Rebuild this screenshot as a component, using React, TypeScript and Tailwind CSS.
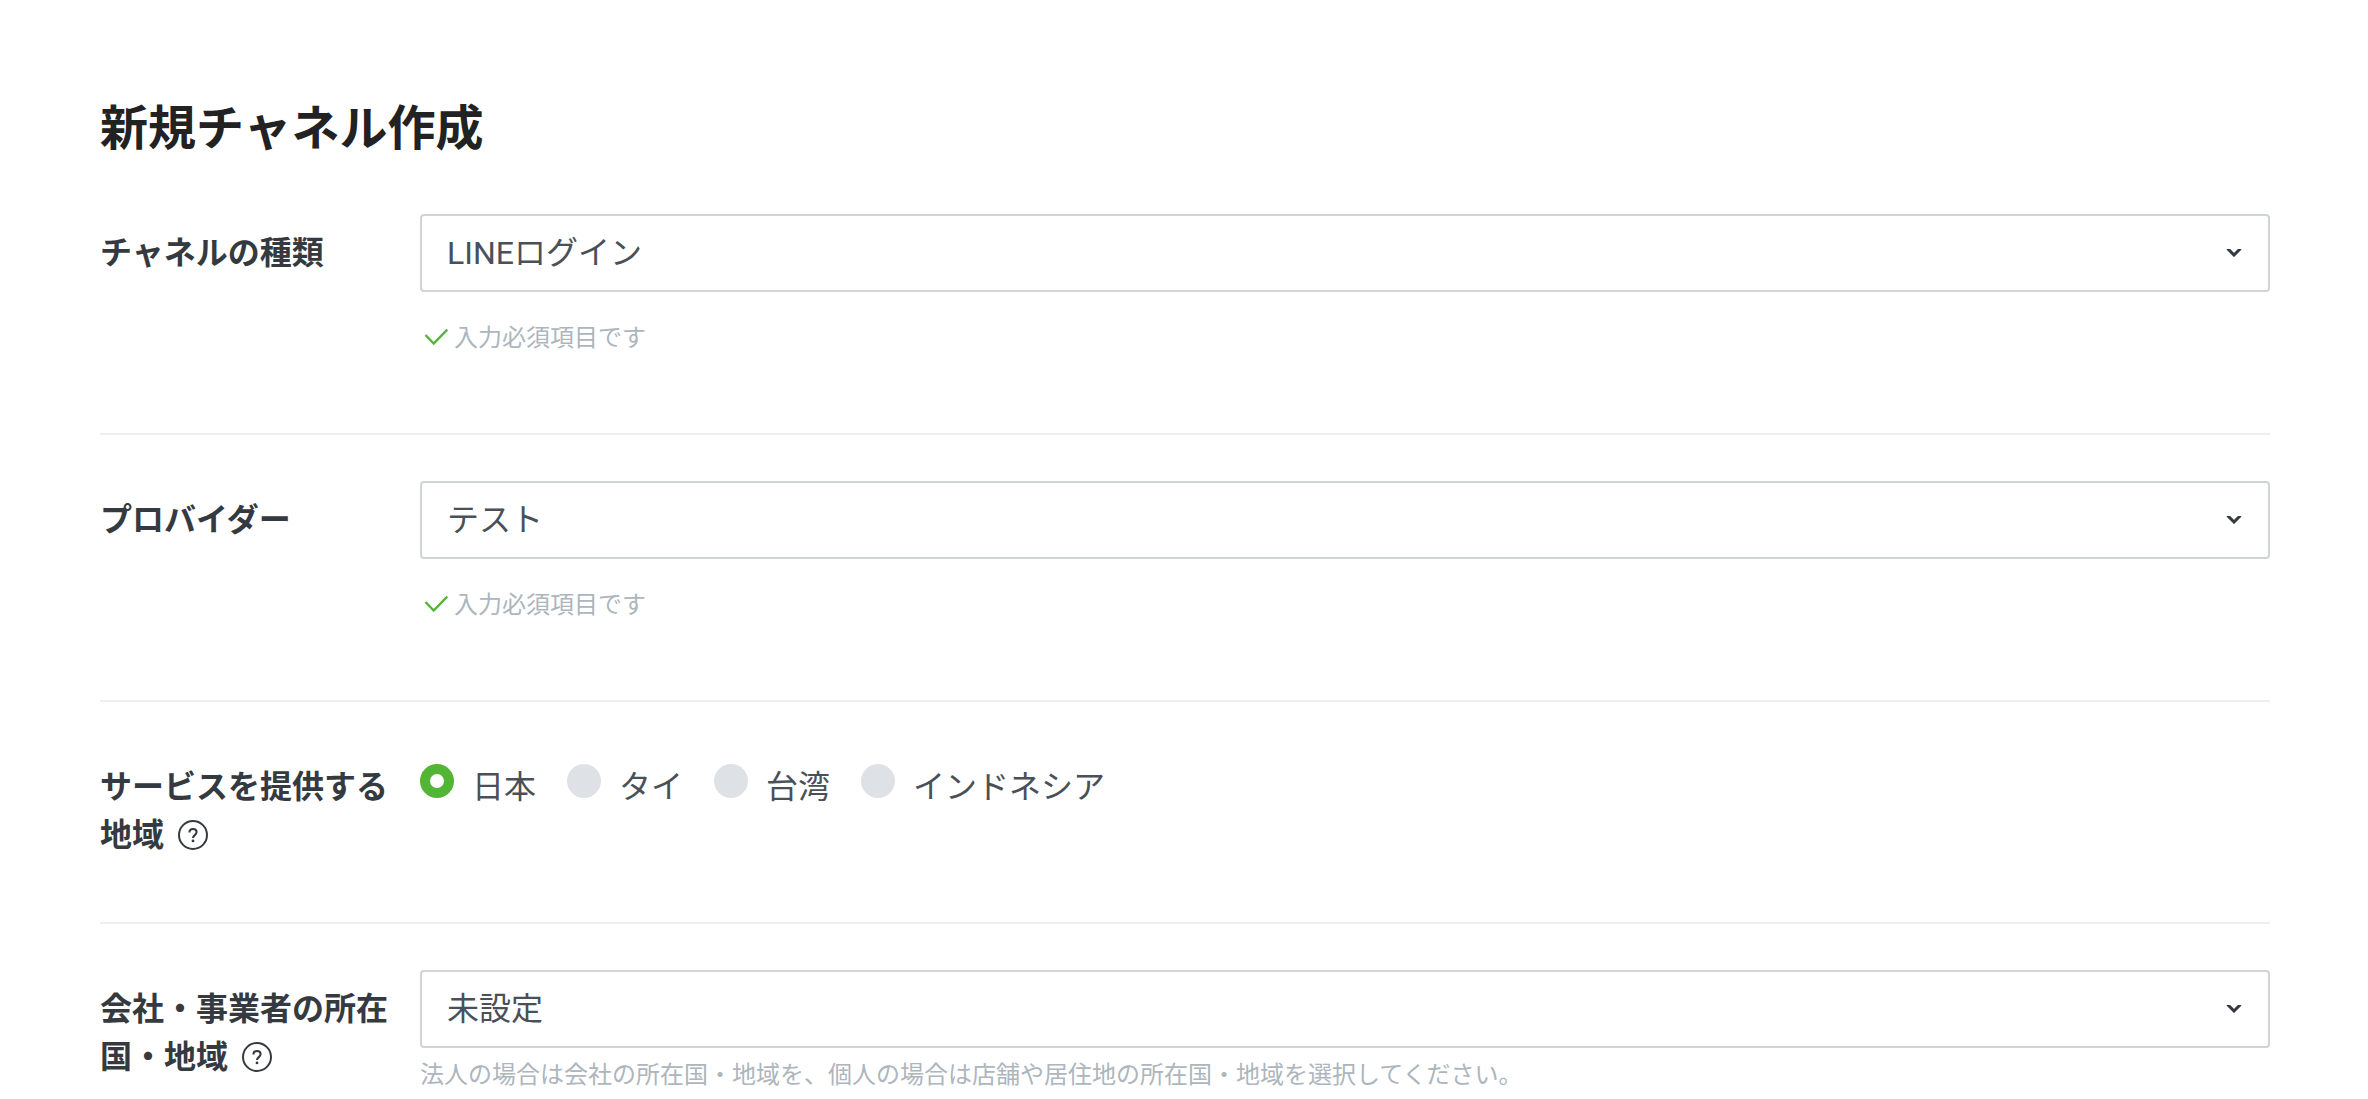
import React, { useState } from 'react';

const regions = ['日本', 'タイ', '台湾', 'インドネシア'];

const HelpButton: React.FC = () => (
  <button type="button" aria-label="ヘルプ" className="ml-3.5 inline-block size-[30px] align-middle -mt-1">
    <svg className="size-full" viewBox="0 0 30 30" fill="none" stroke="currentColor" strokeWidth={2}>
      <circle cx="15" cy="15" r="14" />
      <path d="M11.4 12.4c0-2.2 1.5-3.5 3.6-3.5s3.6 1.3 3.6 3.2c0 1.5-.8 2.2-1.8 3-1.1.9-1.8 1.5-1.8 3" />
      <circle cx="15" cy="20.9" r="1.4" fill="currentColor" stroke="none" />
    </svg>
  </button>
);

const RequiredHint: React.FC = () => (
  <p className="mt-[26px] mb-[15px] flex items-center gap-1.5 pl-1 text-2xl leading-9 text-[#adb5bd]">
    <svg className="h-6 w-6" viewBox="0 0 24 24" fill="none" stroke="#53b535" strokeWidth={2.4}>
      <path d="M1.5 11l8.2 8.5L23.3 5.5" />
    </svg>
    入力必須項目です
  </p>
);

interface SelectProps {
  id: string;
  value: string;
}

const Select: React.FC<SelectProps> = ({ id, value }) => (
  <div className="grid items-center">
    <select
      id={id}
      defaultValue={value}
      className="col-start-1 row-start-1 h-[78px] w-full appearance-none rounded-sm border-2 border-[#ced4da] bg-white px-[25px] pb-px font-[Roboto,'Noto_Sans_CJK_JP',sans-serif] text-[32px] text-[#495057]"
    >
      <option>{value}</option>
    </select>
    <svg
      className="pointer-events-none col-start-1 row-start-1 mr-7 h-2 w-4 justify-self-end"
      viewBox="0 0 16 8"
      fill="none"
      stroke="#343a40"
      strokeWidth={3}
    >
      <path d="M1.5-.5L8 6l6.5-6.5" />
    </svg>
  </div>
);

interface RowProps {
  label: string;
  htmlFor?: string;
  id?: string;
  help?: boolean;
  last?: boolean;
  children: React.ReactNode;
}

const Row: React.FC<RowProps> = ({ label, htmlFor, id, help, last, children }) => (
  <div className={`flex pt-[46px] ${last ? '' : 'border-b-2 border-[#efefef] pb-16'}`}>
    <div className="w-80 shrink-0 pt-3 pr-6 pb-0.5 text-[32px] leading-[48px] font-bold text-[#343a40]">
      {htmlFor ? <label htmlFor={htmlFor}>{label}</label> : <span id={id}>{label}</span>}
      {help && <HelpButton />}
    </div>
    <div className="min-w-0 flex-1">{children}</div>
  </div>
);

const App: React.FC = () => {
  const [region, setRegion] = useState('日本');

  return (
    <main className="bg-white pt-[88px] pr-[98px] pl-[100px] font-['Noto_Sans_CJK_JP',sans-serif]">
      <h1 className="mb-2 text-5xl leading-[72px] font-bold text-[#222]">新規チャネル作成</h1>
      <form>
        <Row label="チャネルの種類" htmlFor="channel-type">
          <Select id="channel-type" value="LINEログイン" />
          <RequiredHint />
        </Row>

        <Row label="プロバイダー" htmlFor="provider">
          <Select id="provider" value="テスト" />
          <RequiredHint />
        </Row>

        <Row label="サービスを提供する地域" id="region-label" help>
          <div role="radiogroup" aria-labelledby="region-label" className="flex flex-wrap gap-x-[31px] pt-3">
            {regions.map(name => (
              <label key={name} className="flex items-start gap-[18px] text-[32px] leading-[48px] text-[#495057]">
                <input
                  type="radio"
                  name="region"
                  value={name}
                  checked={region === name}
                  onChange={() => setRegion(name)}
                  className="mt-1 size-[34px] appearance-none rounded-full bg-[#dee2e6] checked:border-10 checked:border-[#53b535] checked:bg-white"
                />
                {name}
              </label>
            ))}
          </div>
        </Row>

        <Row label="会社・事業者の所在国・地域" htmlFor="country" help last>
          <Select id="country" value="未設定" />
          <p className="mt-[7px] text-2xl leading-9 text-[#adb5bd]">
            法人の場合は会社の所在国・地域を、個人の場合は店舗や居住地の所在国・地域を選択してください。
          </p>
        </Row>
      </form>
    </main>
  );
};

export default App;
